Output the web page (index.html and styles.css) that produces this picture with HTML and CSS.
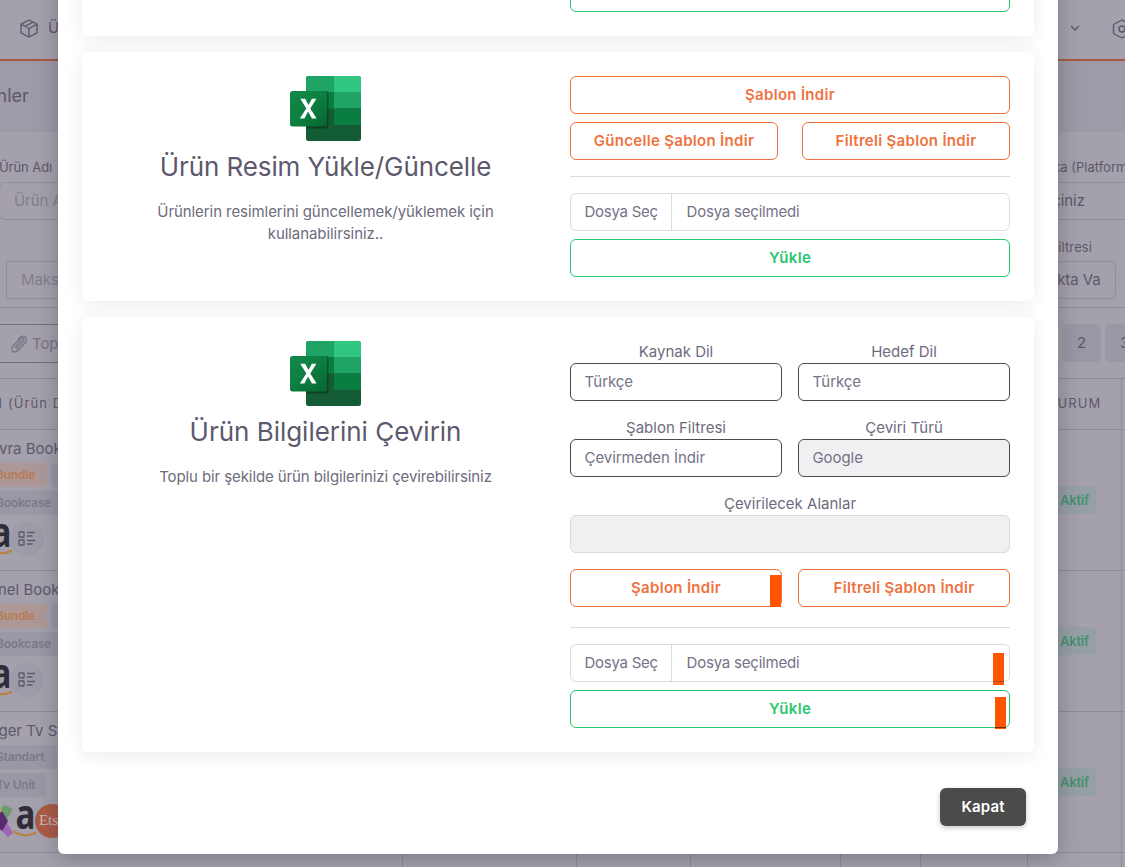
FILE: index.html
```
<!DOCTYPE html>
<html lang="tr">
<head>
<meta charset="utf-8">
<title>Ürünler</title>
<link rel="stylesheet" href="styles.css">
</head>
<body>
<svg class="defs" width="0" height="0">
  <defs>
    <linearGradient id="tile" x1="0" y1="0" x2="1" y2="1"><stop offset="0" stop-color="#138a4b"/><stop offset=".5" stop-color="#0c7e40"/><stop offset="1" stop-color="#07652f"/></linearGradient>
    <symbol id="excel" viewBox="0 0 71 65">
      <rect x="16" width="55" height="65" rx="2.5" fill="#135c35"/>
      <path d="M44 0H18.500a2.500 2.500 0 0 0-2.500 2.500V16h28z" fill="#1fa466"/>
      <path d="M44 0h24.500a2.500 2.500 0 0 1 2.500 2.500V16H44z" fill="#31c783"/>
      <path d="M16 16h28v16.500H16z" fill="#0a7d41"/>
      <path d="M44 16h27v16.500H44z" fill="#1fa466"/>
      <path d="M44 32.500h27V49H44z" fill="#0a7d41"/>
      <path d="M16 16h28v0H16z" fill="#1fa466"/>
      <path d="M16 15h20.500a2 2 0 0 1 2 2v33a2.500 2.500 0 0 1-2.500 2.500H16z" fill="#000" opacity=".3"/>
      <rect y="15" width="37" height="35.500" rx="2.500" fill="url(#tile)"/>
      <path d="M9.800 42.500l6.500-9.900-6-9.900h4.900l3.300 6.300 3.400-6.300h4.500l-6.100 9.800 6.300 10h-4.700l-3.800-6.900-3.700 6.900z" fill="#fff"/>
    </symbol>
    <symbol id="list" viewBox="0 0 18 16"><g fill="none" stroke="currentColor" stroke-width="1.300"><rect x="1" y="1" width="5" height="5" rx=".6"/><rect x="1" y="9" width="5" height="5" rx=".6"/><path d="M9 1.500h8M9 5h5.500M9 9.500h8M9 13h5.500"/></g></symbol>
    <symbol id="amazon" viewBox="0 0 30 34"><text x="2.500" y="25" font-family="Open Sans, sans-serif" font-weight="700" font-size="42" letter-spacing="0" textLength="20" lengthAdjust="spacingAndGlyphs" fill="#2f2b38">a</text><path d="M0 27q12 7.500 23 1.500" fill="none" stroke="#b9803f" stroke-width="2"/></symbol>
  </defs>
</svg>

<div class="page">
  <header class="topbar">
    <span class="nav-item"><svg width="18" height="19" viewBox="0 0 18 19" fill="none" stroke="currentColor" stroke-width="1.400" stroke-linejoin="round"><path d="M9 1l8 4.200v8.600L9 18l-8-4.200V5.200zM1 5.200l8 4.300 8-4.300M9 9.500V18M5 7.300l8-4.200"/></svg>Ürünler</span>
    <span class="nav-end"><svg width="10" height="7" viewBox="0 0 10 7" fill="none" stroke="currentColor" stroke-width="1.400"><path d="M1 1l4 4 4-4"/></svg><svg width="20" height="20" viewBox="0 0 20 20" fill="none" stroke="currentColor" stroke-width="1.400" stroke-linejoin="round"><path d="M10 1l8.500 4.500v9L10 19l-8.500-4.500v-9z"/><circle cx="10" cy="10" r="3"/></svg></span>
  </header>
  <h4 class="page-title">Ürünler</h4>
  <main class="panel">
    <div class="filters">
      <div class="row"><label>Ürün Adı</label><label class="platform">Marka (Platform)</label></div>
      <div class="row"><div class="field name">Ürün Adı</div><div class="field select chosen">Seçiniz</div></div>
      <div class="row second"><span></span><label class="stock">Stok Filtresi</label></div>
      <div class="row"><div class="field maks">Maks</div><div class="field stockbox chosen">Stokta Va</div></div>
    </div>
    <div class="toolbar">
      <div class="bulk"><svg width="17" height="18" viewBox="0 0 17 18" fill="none" stroke="currentColor" stroke-width="1.300" stroke-linecap="round" stroke-linejoin="round"><path d="M11.500 5.500L6 11.300c-.8 1 .5 2.300 1.500 1.300l5.700-6c2-2.300-.8-5-3-2.900L3 11c-4 4.500 1.500 8 5 4.300l7-7.300c4-4.500-1-9-5-5.200L8 5"/></svg>Toplu</div>
      <div class="pages"><span>2</span><span>3</span></div>
    </div>
    <div class="thead"><span>ADI (Ürün Detay)</span><span class="status-col">DURUM</span></div>
    <div class="item">
      <div class="prod"><p class="n1">Evra Bookcase</p><div class="tags"><b class="orange">Bundle</b><b class="blank"></b></div><div class="tags"><b class="wide">Bookcase</b></div>
      <div class="shops"><svg class="amz cut" width="30" height="34"><use href="#amazon"/></svg><i class="more"><svg width="18" height="16"><use href="#list"/></svg></i></div></div>
      <div class="status-col"><b class="active">Aktif</b></div>
    </div>
    <div class="item">
      <div class="prod"><p class="n2">Panel Bookcase</p><div class="tags"><b class="orange">Bundle</b><b class="blank"></b></div><div class="tags"><b class="wide">Bookcase</b></div>
      <div class="shops"><svg class="amz cut" width="30" height="34"><use href="#amazon"/></svg><i class="more"><svg width="18" height="16"><use href="#list"/></svg></i></div></div>
      <div class="status-col"><b class="active">Aktif</b></div>
    </div>
    <div class="item">
      <div class="prod"><p class="n3">Roger Tv Stand</p><div class="tags"><b class="std">Standart</b></div><div class="tags"><b class="unit">Tv Unit</b></div>
      <div class="shops"><svg class="cross" width="13" height="32" viewBox="0 0 13 32"><path d="M0 6l4-6 9 4-6 10H0z" fill="#6a9b6b"/><path d="M0 2l3 5-3 5z" fill="#b8a35d"/><path d="M0 18h7l6 10-5 4-8-8z" fill="#a065b5"/><path d="M2 6l6 10-6 10-2-2V8z" fill="#582a6d"/></svg><svg class="amz" width="26" height="34" viewBox="0 0 26 34"><use href="#amazon" width="30" height="34"/></svg><i class="etsy">Etsy</i></div></div>
      <div class="status-col"><b class="active">Aktif</b></div>
    </div>
    <div class="item last"><div class="prod"><p>Lola Gondo Book Wall</p></div><span class="cell c1"></span><span class="cell c2"></span><span class="cell c3"></span><span class="cell c4"></span><span class="cell c5"></span><div class="status-col"></div></div>
  </main>
</div>

<div class="modal">
  <section class="card first"><p class="clipped">indirip yükleyebilirsiniz</p><div class="clipped-btn"></div></section>
  <section class="card images">
    <div class="intro"><svg width="71" height="65"><use href="#excel"/></svg><h4>Ürün Resim Yükle/Güncelle</h4><p>Ürünlerin resimlerini güncellemek/yüklemek için<br>kullanabilirsiniz..</p></div>
    <div class="actions">
      <button class="btn">Şablon İndir</button>
      <div class="pair wide-gap"><button class="btn">Güncelle Şablon İndir</button><button class="btn">Filtreli Şablon İndir</button></div>
      <hr>
      <div class="file"><span>Dosya Seç</span><span>Dosya seçilmedi</span></div>
      <button class="btn green">Yükle</button>
    </div>
  </section>
  <section class="card translate">
    <div class="intro"><svg width="71" height="65"><use href="#excel"/></svg><h4>Ürün Bilgilerini Çevirin</h4><p class="snug">Toplu bir şekilde ürün bilgilerinizi çevirebilirsiniz</p></div>
    <div class="actions">
      <div class="pair"><div class="group"><label>Kaynak Dil</label><div class="control">Türkçe</div></div><div class="group"><label>Hedef Dil</label><div class="control">Türkçe</div></div></div>
      <div class="pair"><div class="group"><label>Şablon Filtresi</label><div class="control">Çevirmeden İndir</div></div><div class="group"><label>Çeviri Türü</label><div class="control disabled">Google</div></div></div>
      <div class="group"><label>Çevirilecek Alanlar</label><div class="control disabled pale"></div></div>
      <div class="pair"><button class="btn">Şablon İndir<i class="mark m1"></i></button><button class="btn">Filtreli Şablon İndir</button></div>
      <hr>
      <div class="file"><span>Dosya Seç</span><span>Dosya seçilmedi</span><i class="mark m2"></i></div>
      <button class="btn green">Yükle<i class="mark m3"></i></button>
    </div>
  </section>
  <footer><button class="close">Kapat</button></footer>
</div>
</body>
</html>
```
FILE: styles.css
```
* { box-sizing: border-box; }
body { margin: 0; width: 1125px; height: 867px; overflow: hidden; position: relative; font: 15px/22px Inter, "Noto Sans", sans-serif; letter-spacing: -.07px; color: #6d6b7d; background: #9e9aa8; }
p, h4 { margin: 0; font-weight: 400; }
.defs { position: absolute; }
button { font: inherit; }

.page { width: 1125px; height: 867px; overflow: hidden; color: #5d586b; white-space: nowrap; }
.topbar { height: 61px; border-bottom: 2px solid #a9583f; background: #a5a1ac; display: flex; justify-content: space-between; padding: 18px 0 0 20px; }
.nav-item { display: flex; gap: 10px; height: 20px; align-items: center; }
.nav-end { display: flex; gap: 32px; align-items: center; height: 21px; margin-right: -7px; }
.page-title { height: 71px; padding-top: 24px; font-size: 18px; line-height: 22px; margin-left: -34px; }
.panel { background: #a5a1ac; height: 735px; }
.filters { height: 176px; padding-top: 25px; border-bottom: 1px solid #908c9b; font-size: 15px; }
.row { display: flex; justify-content: space-between; }
.row label { font-size: 13px; line-height: 20px; height: 25px; margin-left: -1px; }
.row .platform { width: 96px; letter-spacing: 0; }
.field { height: 38px; border: 1px solid #918d9c; line-height: 35px; padding-left: 14px; border-radius: 6px; color: #827e8d; }
.name { width: 300px; margin-left: -1px; }
.select { width: 260px; padding-left: 158px; margin-right: -10px; }
.chosen { color: #5d586b; }
.second { padding-top: 17px; height: 41px; }
.row .stock { width: 106px; letter-spacing: .1px; }
.maks { width: 280px; margin-left: 6px; border-radius: 0; }
.stockbox { width: 180px; padding-left: 97px; margin-right: 9px; }
.toolbar { height: 70px; padding-top: 16px; display: flex; justify-content: space-between; }
.bulk { width: 300px; height: 39px; border: solid #726e7d; border-width: 1px 0; display: flex; gap: 5px; align-items: center; padding-left: 10px; color: #777382; }
.pages { display: flex; gap: 4px; margin-right: -19px; }
.pages span { width: 39px; height: 38px; border-radius: 5px; background: #9b97a5; text-align: center; line-height: 38px; }
.thead { height: 52px; border: solid #8e8a99; border-width: 1px 0; display: flex; justify-content: space-between; font-size: 13px; line-height: 49px; letter-spacing: 1.1px; }
.thead > span:first-child { margin-left: -22px; }
.status-col { width: 72px; border-right: 1px solid #8e8a99; margin-right: 3px; }
.thead .status-col { text-indent: -3px; }
.item { height: 141px; border-bottom: 1px solid #8e8a99; display: flex; justify-content: space-between; }
.prod { width: 402px; padding-top: 8px; }
.prod p { margin-bottom: 3px; letter-spacing: 0; }
.prod .n1 { margin-left: -10px; }
.prod .n2 { margin-left: -20px; }
.prod .n3 { margin-left: -20px; }
.tags { display: flex; gap: 4px; height: 28px; margin-left: -13px; }
.tags b { height: 24px; border-radius: 4px; background: #9b97a5; color: #7d7988; font-size: 12px; line-height: 24px; font-weight: 600; padding-left: 9px; letter-spacing: -.2px; }
.tags .orange { width: 60px; background: #ae9897; color: #b87a52; }
.tags .blank { width: 60px; }
.tags .wide { width: 100px; }
.tags .std { width: 70px; }
.tags .unit { width: 59px; }
.shops { display: flex; align-items: center; height: 36px; margin-top: 2px; }
.amz { flex: none; }
.amz.cut { margin-left: -11px; }
.more { width: 34px; height: 34px; margin-left: -9px; border-radius: 50%; background: #9e9aa7; display: grid; place-items: center; }
.etsy { width: 34px; height: 34px; margin-left: -4px; border-radius: 50%; background: #ab5b45; color: #c7bcc2; font: 15px/32px "Liberation Serif", serif; padding-left: 4px; overflow: hidden; }
.item .status-col { padding-top: 56px; }
.active { display: block; width: 46px; height: 28px; border-radius: 4px; background: #95a0a5; color: #479071; font-size: 13px; font-weight: 600; line-height: 28px; padding-left: 10px; letter-spacing: -.2px; }
.last { justify-content: flex-start; }
.last .prod { flex: none; padding-top: 9px; }
.last .prod p { margin-left: -17px; }
.cell { flex: none; border-left: 1px solid #8e8a99; }
.c1 { width: 174px; }
.c2 { width: 114px; }
.c3 { width: 150px; }
.c4 { width: 80px; }
.c5 { width: 107px; }
.last .status-col { width: 95px; border-left: 1px solid #8e8a99; }

.modal { position: absolute; left: 58px; top: -40px; width: 1000px; height: 894px; border-radius: 6px; background: #fff; padding: 0 24px; box-shadow: 0 4px 22px rgba(47,43,61,.36); display: flex; flex-direction: column; gap: 16px; }
.card { border-radius: 6px; background: #fff; box-shadow: 0 3px 18px rgba(47,43,61,.09); padding: 24px; display: grid; grid-template-columns: 440px 440px; justify-content: space-between; }
.first { height: 76px; padding-top: 16px; }
.clipped { padding: 3px 77px 0 0; text-align: center; }
.clipped-btn { height: 36px; border: 1px solid #28c76f; border-radius: 6px; }
.images { height: 249px; }
.translate { height: 435px; }
.intro { text-align: center; padding-right: 1px; white-space: nowrap; }
.intro svg { display: block; margin: 0 auto; }
.intro h4 { font-size: 26px; line-height: 36px; height: 36px; margin: 8px 0 16px; color: #5d596c; letter-spacing: -.09px; }
.translate h4 { letter-spacing: -.02px; }
.snug { letter-spacing: -.1px; }
.btn { display: block; position: relative; width: 100%; height: 38px; padding: 0; border: 1px solid #ee733f; border-radius: 6px; background: transparent; color: #ee733f; font-weight: 560; letter-spacing: .3px; }
.green { color: #28c76f; border-color: #28c76f; }
.pair { display: grid; grid-template-columns: 1fr 1fr; gap: 16px; }
.wide-gap { gap: 24px; margin-top: 8px; }
hr { border: 0; border-top: 1px solid #dbdade; margin: 16px 0; height: 0; }
.file { position: relative; display: flex; height: 38px; line-height: 36px; border: 1px solid #dbdade; border-radius: 6px; margin-bottom: 8px; color: #757286; }
.file span:first-of-type { width: 101px; padding-left: 13.5px; border-right: 1px solid #dbdade; letter-spacing: -.25px; }
.file span:nth-of-type(2) { padding-left: 14.5px; letter-spacing: -.2px; }
.group { height: 76px; }
.group label { display: block; height: 22px; text-align: center; letter-spacing: 0; }
.control { height: 38px; border: 1px solid #4b4b4b; border-radius: 6px; padding-left: 13.5px; line-height: 36px; color: #757286; }
.disabled { background: #f0f0f2; }
.pale { border-color: #dbdade; }
.translate hr { margin-top: 20px; }
.mark { position: absolute; width: 11px; height: 32px; background: #ff5500; }
.m1 { right: 0; top: 5px; }
.m2 { right: 5px; top: 8px; }
.m3 { right: 3px; top: 6px; }
.m2::after, .m3::after { content: ""; display: block; height: 1px; margin-top: 28px; background: #b84a1c; }
.m3::after { margin-top: 30px; background: #6b2a0c; }
footer { display: flex; justify-content: flex-end; padding: 20px 8px 0; }
.close { width: 86px; height: 38px; border: 0; border-radius: 6px; background: #4b4b4b; color: #fff; font-weight: 600; letter-spacing: .1px; box-shadow: 0 2px 5px rgba(47,43,61,.25); }
```
